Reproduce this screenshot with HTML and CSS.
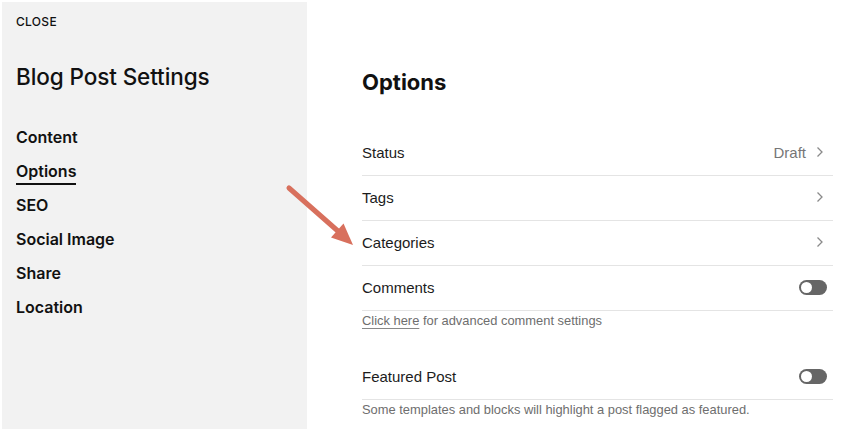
FILE: index.html
```html
<!DOCTYPE html>
<html>
<head>
<meta charset="utf-8">
<link rel="stylesheet" href="styles.css">
</head>
<body>
<div class="page">
  <aside class="sidebar">
    <div class="close">CLOSE</div>
    <h1 class="title">Blog Post Settings</h1>
    <nav class="nav">
      <div class="nav-item">Content</div>
      <div class="nav-item"><span class="active">Options</span></div>
      <div class="nav-item">SEO</div>
      <div class="nav-item">Social Image</div>
      <div class="nav-item">Share</div>
      <div class="nav-item">Location</div>
    </nav>
  </aside>
  <main class="main">
    <h2 class="heading">Options</h2>
    <div class="row">
      <span class="label">Status</span>
      <span class="right"><span class="value">Draft</span>
        <svg class="chev" width="10" height="12" viewBox="0 0 10 12"><path d="M2.5 1.5 L7 6 L2.5 10.5" fill="none" stroke="#8a8a8a" stroke-width="1.3"/></svg>
      </span>
    </div>
    <div class="row">
      <span class="label">Tags</span>
      <span class="right"><svg class="chev" width="10" height="12" viewBox="0 0 10 12"><path d="M2.5 1.5 L7 6 L2.5 10.5" fill="none" stroke="#8a8a8a" stroke-width="1.3"/></svg></span>
    </div>
    <div class="row">
      <span class="label">Categories</span>
      <span class="right"><svg class="chev" width="10" height="12" viewBox="0 0 10 12"><path d="M2.5 1.5 L7 6 L2.5 10.5" fill="none" stroke="#8a8a8a" stroke-width="1.3"/></svg></span>
    </div>
    <div class="row row-toggle">
      <span class="label">Comments</span>
      <span class="toggle"><span class="knob"></span></span>
    </div>
    <p class="help"><span class="link">Click here</span> for advanced comment settings</p>
    <div class="row row-toggle featured">
      <span class="label">Featured Post</span>
      <span class="toggle"><span class="knob"></span></span>
    </div>
    <p class="help">Some templates and blocks will highlight a post flagged as featured.</p>
  </main>
  <svg class="arrow" width="862" height="431" viewBox="0 0 862 431">
    <line x1="289" y1="188" x2="339" y2="232" stroke="#d8705d" stroke-width="5" stroke-linecap="round"/>
    <polygon points="353,245 331,237.5 343.5,223.5" fill="#d8705d"/>
  </svg>
</div>
</body>
</html>
```

FILE: styles.css
```css
html, body {
  margin: 0;
  padding: 0;
  background: #fff;
}
.page {
  position: relative;
  display: flex;
  width: 862px;
  height: 431px;
  padding: 2px 0 2px 2px;
  box-sizing: border-box;
  overflow: hidden;
}
.sidebar {
  width: 305px;
  flex: none;
  background: #f2f2f2;
  padding: 12px 0 0 14px;
  box-sizing: border-box;
  font-family: Inter, "Noto Sans", sans-serif;
  color: #111;
}
.close {
  font-size: 12px;
  line-height: 16px;
  font-weight: 500;
  letter-spacing: 0.3px;
}
.title {
  margin: 33px 0 0;
  font-size: 22.5px;
  line-height: 28px;
  font-weight: 500;
  letter-spacing: -0.1px;
}
.nav {
  margin-top: 29px;
  display: flex;
  flex-direction: column;
}
.nav-item {
  font-size: 16px;
  line-height: 20px;
  padding: 7px 0;
  font-weight: 600;
}
.active {
  padding-bottom: 2px;
  border-bottom: 2px solid #111;
}
.main {
  flex: 1;
  padding: 66px 29px 0 55px;
  font-family: "Liberation Sans", Arial, sans-serif;
  color: #1c1c1c;
}
.heading {
  margin: 0 0 35px;
  font-family: Inter, "Noto Sans", sans-serif;
  font-size: 22px;
  line-height: 28px;
  font-weight: 700;
  color: #111;
}
.row {
  display: flex;
  align-items: center;
  justify-content: space-between;
  height: 44px;
  padding-bottom: 2px;
  box-sizing: border-box;
  height: 45px;
  border-bottom: 1px solid #e4e4e4;
  font-size: 15px;
  padding-right: 8px;
}
.row-toggle {
  padding-right: 6px;
}
.featured {
  margin-top: 25px;
}
.right {
  display: flex;
  align-items: center;
  gap: 9px;
}
.value {
  color: #767676;
}
.chev {
  display: block;
}
.toggle {
  width: 28px;
  height: 15px;
  border-radius: 8px;
  background: #666;
  position: relative;
  display: block;
}
.knob {
  position: absolute;
  left: 2px;
  top: 2px;
  width: 11px;
  height: 11px;
  border-radius: 50%;
  background: #fff;
}
.help {
  margin: 0;
  padding-top: 1px;
  font-size: 12.9px;
  line-height: 18px;
  color: #6e6e6e;
}
.link {
  text-decoration: underline;
  text-underline-offset: 3px;
  text-decoration-color: #888;
}
.arrow {
  position: absolute;
  left: 0;
  top: 0;
  pointer-events: none;
}
```
